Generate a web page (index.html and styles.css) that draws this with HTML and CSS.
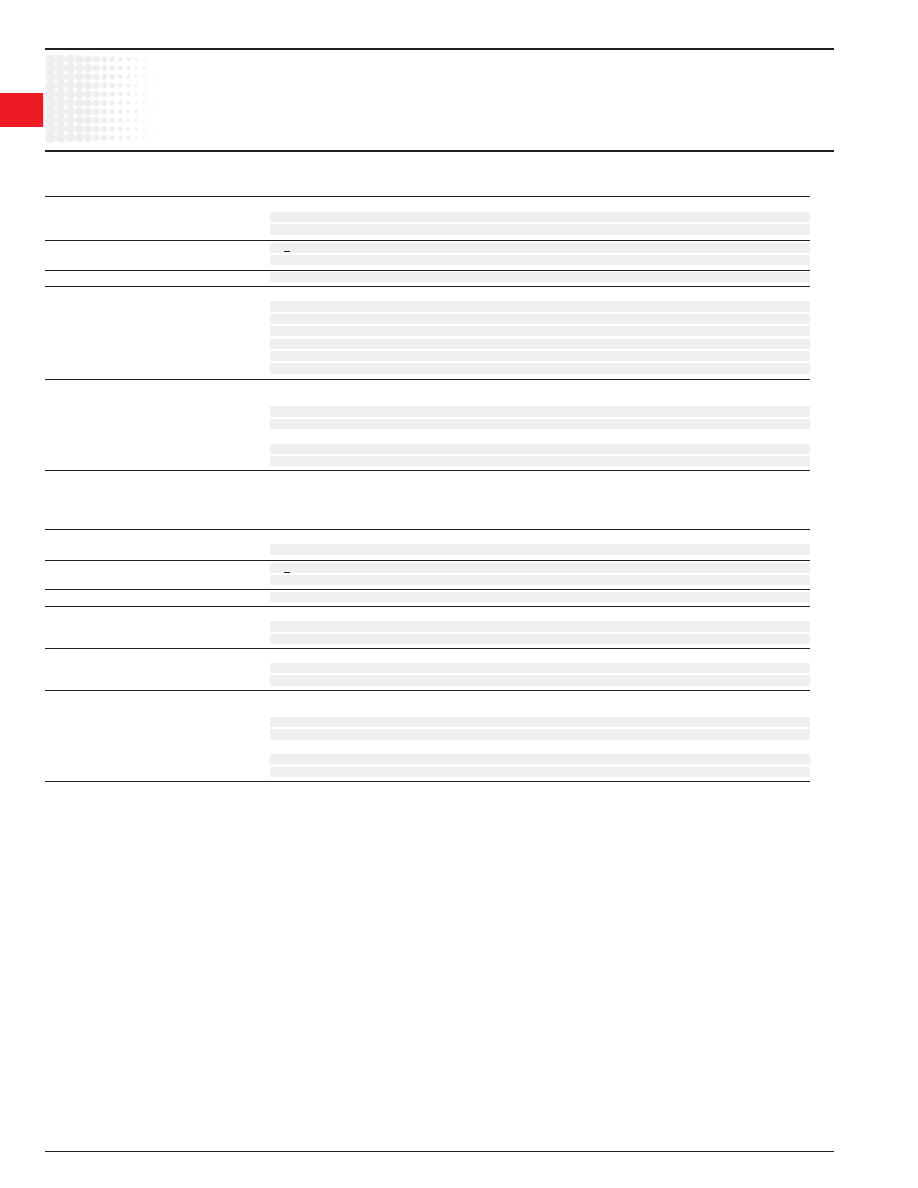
FILE: index.html
```html
<!DOCTYPE html>
<html lang="en">
<head>
<meta charset="utf-8">
<title>Specification sheet</title>
<link rel="stylesheet" href="styles.css">
</head>
<body>
<div class="page">
  <header class="head">
    <div class="tab"></div>
    <div class="head-box">
      <svg class="dots" width="112" height="90" viewBox="0 0 112 90" xmlns="http://www.w3.org/2000/svg" xmlns:xlink="http://www.w3.org/1999/xlink">
        <defs>
          <g id="dotrow" fill="#eeeeee">
            <circle cx="5.7" cy="4.3" r="5.4"/>
            <circle cx="15.7" cy="4.3" r="5.1"/>
            <circle cx="25.3" cy="4.3" r="4.8"/>
            <circle cx="34.3" cy="4.3" r="4.4"/>
            <circle cx="43" cy="4.3" r="4.0"/>
            <circle cx="51.3" cy="4.3" r="3.5"/>
            <circle cx="59.3" cy="4.3" r="3.1"/>
            <circle cx="67.3" cy="4.3" r="2.7"/>
            <circle cx="75.3" cy="4.3" r="2.2"/>
            <circle cx="83.3" cy="4.3" r="1.8"/>
            <circle cx="91.3" cy="4.3" r="1.4"/>
            <circle cx="99.3" cy="4.3" r="1.0"/>
            <circle cx="107.3" cy="4.3" r="0.6"/>
          </g>
        </defs>
        <use href="#dotrow" xlink:href="#dotrow" y="0"/>
        <use href="#dotrow" xlink:href="#dotrow" y="8.7"/>
        <use href="#dotrow" xlink:href="#dotrow" y="17.4"/>
        <use href="#dotrow" xlink:href="#dotrow" y="26.1"/>
        <use href="#dotrow" xlink:href="#dotrow" y="34.8"/>
        <use href="#dotrow" xlink:href="#dotrow" y="43.5"/>
        <use href="#dotrow" xlink:href="#dotrow" y="52.2"/>
        <use href="#dotrow" xlink:href="#dotrow" y="60.9"/>
        <use href="#dotrow" xlink:href="#dotrow" y="69.6"/>
        <use href="#dotrow" xlink:href="#dotrow" y="78.3"/>
      </svg>
    </div>
  </header>

  <main class="sheet">
    <section class="spec spec-1">
      <div class="group g-first">
        <div class="label"></div>
        <div class="vals">
          <div class="row"></div>
          <div class="row band"></div>
          <div class="row band"></div>
        </div>
      </div>
      <div class="group">
        <div class="label"></div>
        <div class="vals">
          <div class="row band"><span class="dash"></span></div>
          <div class="row band"></div>
        </div>
      </div>
      <div class="group">
        <div class="label"></div>
        <div class="vals">
          <div class="row band"></div>
        </div>
      </div>
      <div class="group g-tall">
        <div class="label"></div>
        <div class="vals">
          <div class="row"></div>
          <div class="row band"></div>
          <div class="row band"></div>
          <div class="row band"></div>
          <div class="row band"></div>
          <div class="row band"></div>
          <div class="row band"></div>
        </div>
      </div>
      <div class="group">
        <div class="label"></div>
        <div class="vals">
          <div class="row"></div>
          <div class="row"></div>
          <div class="row band"></div>
          <div class="row band"></div>
          <div class="row"></div>
          <div class="row band"></div>
          <div class="row band"></div>
        </div>
      </div>
    </section>

    <section class="spec spec-2">
      <div class="group g-tall">
        <div class="label"></div>
        <div class="vals">
          <div class="row"></div>
          <div class="row band"></div>
        </div>
      </div>
      <div class="group">
        <div class="label"></div>
        <div class="vals">
          <div class="row band"><span class="dash dash-low"></span></div>
          <div class="row band"></div>
        </div>
      </div>
      <div class="group">
        <div class="label"></div>
        <div class="vals">
          <div class="row band"></div>
        </div>
      </div>
      <div class="group">
        <div class="label"></div>
        <div class="vals">
          <div class="row"></div>
          <div class="row band"></div>
          <div class="row band"></div>
        </div>
      </div>
      <div class="group">
        <div class="label"></div>
        <div class="vals">
          <div class="row"></div>
          <div class="row band"></div>
          <div class="row band"></div>
        </div>
      </div>
      <div class="group">
        <div class="label"></div>
        <div class="vals">
          <div class="row"></div>
          <div class="row"></div>
          <div class="row band"></div>
          <div class="row band"></div>
          <div class="row"></div>
          <div class="row band"></div>
          <div class="row band"></div>
        </div>
      </div>
    </section>
  </main>

  <footer class="foot"></footer>
</div>
</body>
</html>
```

FILE: styles.css
```css
html, body {
  margin: 0;
  padding: 0;
  background: #ffffff;
  font-family: "Liberation Sans", Arial, sans-serif;
}

.page {
  display: flex;
  flex-direction: column;
  min-height: 1188px;
  width: 918px;
}

/* header */
.head {
  display: flex;
  margin-top: 48px;
}

.tab {
  width: 43px;
  height: 34px;
  margin-top: 45px;
  margin-right: 2px;
  background: #ed1c24;
  flex: none;
}

.head-box {
  width: 789px;
  height: 95px;
  padding-top: 5px;
  border-top: 2px solid #231f20;
  border-bottom: 2px solid #231f20;
}

.dots {
  display: block;
}

/* spec table */
.sheet {
  margin-left: 45px;
  width: 765px;
}

.spec {
  border-bottom: 1px solid #231f20;
}

.spec-1 {
  margin-top: 44px;
}

.spec-2 {
  margin-top: 58px;
}

.group {
  display: grid;
  grid-template-columns: 225px 540px;
  border-top: 1px solid #231f20;
  padding: 1.5px 0 2px;
}

.g-first {
  padding-top: 2.5px;
  padding-bottom: 3.6px;
}

.g-tall {
  padding-bottom: 3.5px;
}

.vals {
  display: flex;
  flex-direction: column;
}

.row {
  height: 10.3px;
  margin-bottom: 2.1px;
  display: flex;
  align-items: flex-end;
  padding-left: 14px;
}

.band {
  background: #efefef;
}

.dash {
  display: block;
  width: 6px;
  height: 1px;
  margin-bottom: 1px;
  background: #231f20;
}

.dash-low {
  margin-bottom: 0;
}

/* footer */
.foot {
  margin-top: auto;
  margin-left: 45px;
  margin-bottom: 36px;
  width: 789px;
  border-top: 1px solid #231f20;
}
```
